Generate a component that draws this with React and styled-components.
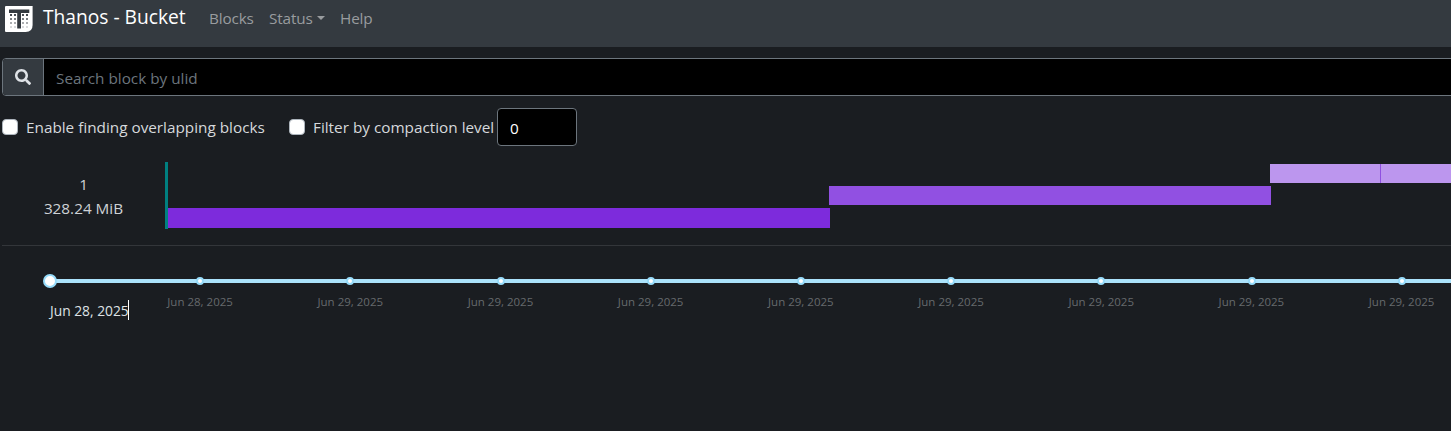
import React from 'react';
import styled, { createGlobalStyle } from 'styled-components';

const GlobalStyle = createGlobalStyle`
  * { box-sizing: border-box; }
  body {
    margin: 0;
    min-height: 431px;
    overflow: hidden;
    background: #1a1d21;
    color: #d6d9dc;
    font-family: "Open Sans", "Noto Sans", sans-serif;
    font-size: 15.3px;
    line-height: 24px;
  }
`;

const Navbar = styled.nav`
  display: flex;
  height: 47px;
  padding: 5px 5px 0;
  background: #343a40;
`;

const Logo = styled.svg`
  width: 28px;
  height: 28px;
  flex: none;
`;

const Brand = styled.span`
  width: 142px;
  margin-left: 10px;
  color: #fff;
  font-size: 19.2px;
  white-space: nowrap;
`;

const NavLinks = styled.div`
  display: flex;
  gap: 16px;
  margin: 1px 0 0 24px;
  color: #999c9f;
`;

const NavLink = styled.span`
  width: ${(p) => p.$width}px;
  letter-spacing: -0.15px;
  white-space: nowrap;
`;

const Caret = styled.i`
  display: inline-block;
  margin-left: 4px;
  vertical-align: 4px;
  border: 4px solid transparent;
  border-top-color: currentColor;
  border-bottom: 0;
`;

const Main = styled.main`
  width: 1475px;
  padding: 11px 0 0 2px;
`;

const SearchGroup = styled.div`
  display: flex;
  height: 38px;
  border: 1px solid #6c757d;
  border-radius: 4px;
  overflow: hidden;
  background: #000;
`;

const SearchIcon = styled.div`
  display: grid;
  place-items: center;
  width: 41px;
  border-right: 1px solid #6c757d;
  background: #343a40;
  color: #dee2e6;
`;

const SearchInput = styled.input`
  flex: 1;
  padding: 2px 12px 0;
  border: 0;
  background: #000;
  color: #fff;
  font: inherit;
  &::placeholder { color: #6c757d; opacity: 1; }
`;

const Filters = styled.div`
  display: flex;
  align-items: center;
  height: 38px;
  margin-top: 12px;
`;

const Checkbox = styled.span`
  width: 16px;
  height: 16px;
  border: 1px solid #adb5bd;
  border-radius: 4px;
  background: #fff;
`;

const FilterLabel = styled.label`
  width: ${(p) => p.$width}px;
  margin: 0 ${(p) => p.$gap}px 0 8px;
  white-space: nowrap;
`;

const LevelInput = styled.input`
  width: 80px;
  height: 38px;
  padding: 1px 12px 0;
  border: 1px solid #6c757d;
  border-radius: 4px;
  background: #000;
  color: #fff;
  font: inherit;
`;

const Source = styled.section`
  display: flex;
  height: 67px;
  margin-top: 16px;
`;

const SourceTitle = styled.div`
  width: 163px;
  padding-top: 10px;
  text-align: center;
  color: #ced2d6;
`;

const Rows = styled.div`
  flex: 1;
  padding-top: 2px;
  border-left: 3px solid #008080;
`;

const BlockRow = styled.div`
  display: flex;
  height: 22px;
  padding-left: ${(p) => p.$start}px;
`;

const Block = styled.div`
  width: ${(p) => p.$width}px;
  height: ${(p) => p.$height || 19}px;
  background: ${(p) => p.$color};
  border-right: ${(p) => (p.$divided ? '1px solid #8f50e0' : '0')};
`;

const Timeline = styled.section`
  margin-top: 16px;
  border-top: 1px solid #33363a;
  padding: 33px 0 0 48px;
`;

const Rail = styled.div`
  position: relative;
  height: 4px;
  background: #abe2fb;
`;

const Dot = styled.span`
  position: absolute;
  top: 50%;
  left: ${(p) => p.$left}px;
  width: ${(p) => p.$size}px;
  height: ${(p) => p.$size}px;
  border: 2px solid #96dbfa;
  border-radius: 50%;
  background: #fff;
  transform: translate(-50%, -50%);
`;

const Marks = styled.div`
  display: flex;
  height: 17px;
  padding: 10px 0 0 75px;
`;

const Mark = styled.span`
  flex: 0 0 150.2px;
  color: #666a6d;
  font-size: 11.5px;
  line-height: 18px;
  text-align: center;
`;

const SelectedDate = styled.div`
  width: 79px;
  height: 20px;
  border-right: 1px solid #fff;
  color: #dee2e6;
  font-size: 13.8px;
  line-height: 22px;
  white-space: nowrap;
`;

const ticks = Array.from({ length: 9 }, (_, i) => ({
  left: 150.2 * (i + 1),
  label: i === 0 ? 'Jun 28, 2025' : 'Jun 29, 2025',
}));

const logoRows = [9, 13, 17, 21];
const logoColumns = [5, 9, 17, 21];

function ThanosLogo() {
  return (
    <Logo viewBox="0 0 28 28">
      <path d="M1 1h26.600v19q0 7-7 7H1q-1 0-1-1V2q0-1 1-1Z" fill="#fff" />
      <path d="M4 4.500h20.300V8H16v15.500h-3.800V8H4Z" fill="#343a40" />
      {logoRows.map((y, row) =>
        logoColumns.map((x) => (
          <rect key={`${x}-${y}`} x={x} y={y} width="2" height="2" fill="#343a40" opacity={0.9 - row * 0.24} />
        ))
      )}
    </Logo>
  );
}

export default function App() {
  return (
    <>
      <GlobalStyle />
      <Navbar>
        <ThanosLogo />
        <Brand>Thanos - Bucket</Brand>
        <NavLinks>
          <NavLink $width={44}>Blocks</NavLink>
          <NavLink $width={55}>Status<Caret /></NavLink>
          <NavLink $width={34}>Help</NavLink>
        </NavLinks>
      </Navbar>
      <Main>
        <SearchGroup>
          <SearchIcon>
            <svg width="16" height="16" viewBox="0 0 512 512" fill="currentColor">
              <path d="M505 442.7 405.3 343c-4.500-4.500-10.600-7-17-7H372c27.600-35.300 44-79.700 44-128C416 93.100 322.900 0 208 0S0 93.100 0 208s93.100 208 208 208c48.300 0 92.700-16.400 128-44v16.300c0 6.400 2.500 12.500 7 17l99.700 99.700c9.400 9.400 24.600 9.400 33.900 0l28.300-28.300c9.400-9.400 9.400-24.600.1-34zM208 336c-70.700 0-128-57.200-128-128 0-70.700 57.200-128 128-128 70.700 0 128 57.200 128 128 0 70.700-57.200 128-128 128z" />
            </svg>
          </SearchIcon>
          <SearchInput placeholder="Search block by ulid" />
        </SearchGroup>
        <Filters>
          <Checkbox />
          <FilterLabel $width={239} $gap={24}>Enable finding overlapping blocks</FilterLabel>
          <Checkbox />
          <FilterLabel $width={180} $gap={4}>Filter by compaction level</FilterLabel>
          <LevelInput defaultValue="0" />
        </Filters>
        <Source>
          <SourceTitle>
            <div>1</div>
            <div>328.24 MiB</div>
          </SourceTitle>
          <Rows>
            <BlockRow $start={1102}>
              <Block $width={111} $color="#bc96ee" $divided />
              <Block $width={94} $color="#bc96ee" />
            </BlockRow>
            <BlockRow $start={661}>
              <Block $width={442} $color="#9150e2" />
            </BlockRow>
            <BlockRow $start={0}>
              <Block $width={662} $height={20} $color="#7d2bdc" />
            </BlockRow>
          </Rows>
        </Source>
        <Timeline>
          <Rail>
            <Dot $left={0} $size={14} />
            {ticks.map((t) => <Dot key={t.left} $left={t.left} $size={8} />)}
          </Rail>
          <Marks>
            {ticks.map((t) => <Mark key={t.left}>{t.label}</Mark>)}
          </Marks>
          <SelectedDate>Jun 28, 2025</SelectedDate>
        </Timeline>
      </Main>
    </>
  );
}
